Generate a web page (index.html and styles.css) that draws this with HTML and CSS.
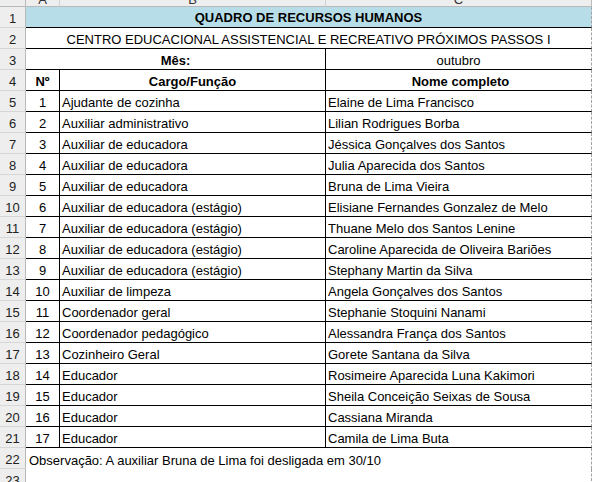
FILE: index.html
```html
<!DOCTYPE html>
<html lang="pt">
<head>
<meta charset="utf-8">
<title>Quadro de Recursos Humanos</title>
<link rel="stylesheet" href="styles.css">
</head>
<body>
<div class="sheet">
  <div class="ch corner"></div>
  <div class="ch">A</div>
  <div class="ch">B</div>
  <div class="ch last">C</div>

  <div class="rh">1</div>
  <div class="cell span3 title bb pb">QUADRO DE RECURSOS HUMANOS</div>

  <div class="rh">2</div>
  <div class="cell span3 center bb pb">CENTRO EDUCACIONAL ASSISTENCIAL E RECREATIVO PRÓXIMOS PASSOS I</div>

  <div class="rh">3</div>
  <div class="cell span2 center bold bb br">Mês:</div>
  <div class="cell center bb pb">outubro</div>

  <div class="rh">4</div>
  <div class="cell center bold bb br">Nº</div>
  <div class="cell center bold bb br">Cargo/Função</div>
  <div class="cell center bold bb pb shift">Nome completo</div>

  <div class="rh">5</div><div class="cell center bb br">1</div><div class="cell bb br">Ajudante de cozinha</div><div class="cell bb pb">Elaine de Lima Francisco</div>
  <div class="rh">6</div><div class="cell center bb br">2</div><div class="cell bb br">Auxiliar administrativo</div><div class="cell bb pb">Lilian Rodrigues Borba</div>
  <div class="rh">7</div><div class="cell center bb br">3</div><div class="cell bb br">Auxiliar de educadora</div><div class="cell bb pb">Jéssica Gonçalves dos Santos</div>
  <div class="rh">8</div><div class="cell center bb br">4</div><div class="cell bb br">Auxiliar de educadora</div><div class="cell bb pb">Julia Aparecida dos Santos</div>
  <div class="rh">9</div><div class="cell center bb br">5</div><div class="cell bb br">Auxiliar de educadora</div><div class="cell bb pb">Bruna de Lima Vieira</div>
  <div class="rh">10</div><div class="cell center bb br">6</div><div class="cell bb br">Auxiliar de educadora (estágio)</div><div class="cell bb pb">Elisiane Fernandes Gonzalez de Melo</div>
  <div class="rh">11</div><div class="cell center bb br">7</div><div class="cell bb br">Auxiliar de educadora (estágio)</div><div class="cell bb pb">Thuane Melo dos Santos Lenine</div>
  <div class="rh">12</div><div class="cell center bb br">8</div><div class="cell bb br">Auxiliar de educadora (estágio)</div><div class="cell bb pb">Caroline Aparecida de Oliveira Bariões</div>
  <div class="rh">13</div><div class="cell center bb br">9</div><div class="cell bb br">Auxiliar de educadora (estágio)</div><div class="cell bb pb">Stephany Martin da Silva</div>
  <div class="rh">14</div><div class="cell center bb br">10</div><div class="cell bb br">Auxiliar de limpeza</div><div class="cell bb pb">Angela Gonçalves dos Santos</div>
  <div class="rh">15</div><div class="cell center bb br">11</div><div class="cell bb br">Coordenador geral</div><div class="cell bb pb">Stephanie Stoquini Nanami</div>
  <div class="rh">16</div><div class="cell center bb br">12</div><div class="cell bb br">Coordenador pedagógico</div><div class="cell bb pb">Alessandra França dos Santos</div>
  <div class="rh">17</div><div class="cell center bb br">13</div><div class="cell bb br">Cozinheiro Geral</div><div class="cell bb pb">Gorete Santana da Silva</div>
  <div class="rh">18</div><div class="cell center bb br">14</div><div class="cell bb br">Educador</div><div class="cell bb pb">Rosimeire Aparecida Luna Kakimori</div>
  <div class="rh">19</div><div class="cell center bb br">15</div><div class="cell bb br">Educador</div><div class="cell bb pb">Sheila Conceição Seixas de Sousa</div>
  <div class="rh">20</div><div class="cell center bb br">16</div><div class="cell bb br">Educador</div><div class="cell bb pb">Cassiana Miranda</div>
  <div class="rh">21</div><div class="cell center bb br">17</div><div class="cell bb br">Educador</div><div class="cell bb pb">Camila de Lima Buta</div>

  <div class="rh">22</div>
  <div class="cell span3 pb obs">Observação: A auxiliar Bruna de Lima foi desligada em 30/10</div>

  <div class="rh">23</div>
  <div class="cell span3 pb"></div>
</div>
</body>
</html>
```

FILE: styles.css
```css
* {
  box-sizing: border-box;
}

html,
body {
  margin: 0;
  padding: 0;
  background: #ffffff;
}

body {
  font-family: "Liberation Sans", Arial, sans-serif;
  font-size: 13px;
  color: #000000;
  width: 593px;
  height: 482px;
  overflow: hidden;
}

.sheet {
  display: grid;
  grid-template-columns: 26px 34px 266px 266px;
  grid-template-rows: 7px;
  grid-auto-rows: 21px;
  width: 593px;
}

/* column headers (mostly scrolled out of view) */
.ch {
  display: flex;
  align-items: flex-end;
  justify-content: center;
  overflow: hidden;
  line-height: 13px;
  color: #333333;
  background: #eeeeee;
  border-right: 1px solid #d2d2d2;
  border-bottom: 1px solid #b9b9b9;
}

.ch.corner {
  border-right-color: #b9b9b9;
}

.ch.last {
  border-right: 1px solid #bdbdbd;
}

/* row headers */
.rh {
  display: flex;
  align-items: flex-end;
  justify-content: center;
  line-height: 13px;
  padding-bottom: 2px;
  color: #222222;
  background: #eeeeee;
  border-right: 1px solid #b9b9b9;
  border-bottom: 1px solid #d6d6d6;
}

/* worksheet cells */
.cell {
  display: flex;
  align-items: flex-end;
  line-height: 13px;
  padding: 0 2px 2px 2px;
  white-space: nowrap;
  overflow: visible;
}

.span2 {
  grid-column: span 2;
}

.span3 {
  grid-column: span 3;
}

.center {
  justify-content: center;
}

.bold {
  font-weight: bold;
}

.title {
  justify-content: center;
  font-weight: bold;
  background: #b7dee8;
  padding-bottom: 3px;
}

.shift {
  padding-left: 6px;
}

.obs {
  padding-left: 3px;
}

.bb {
  border-bottom: 1px solid #000000;
}

.br {
  border-right: 1px solid #000000;
}

.pb {
  border-right: 1px dashed #a3a3a3;
}
```
